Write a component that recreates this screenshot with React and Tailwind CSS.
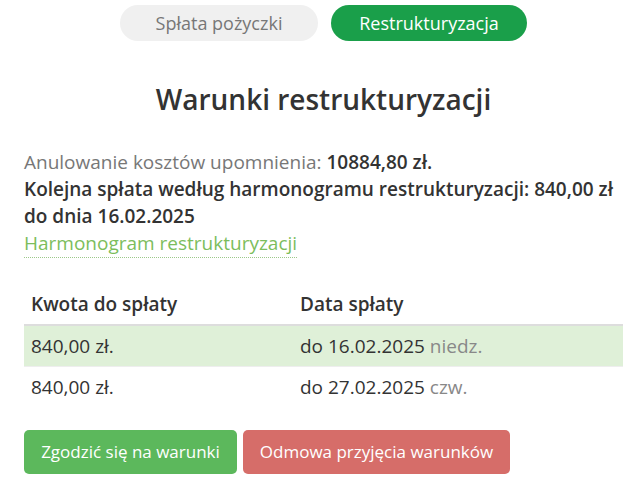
export default function App() {
  const rows = [
    { amount: '840,00 zł.', date: 'do 16.02.2025', day: 'niedz.', highlight: true },
    { amount: '840,00 zł.', date: 'do 27.02.2025', day: 'czw.', highlight: false },
  ];

  return (
    <div className="w-[623px] h-[480px] overflow-hidden bg-white pl-[24px] text-[#333]" style={{ fontFamily: '"Open Sans", "DejaVu Sans", sans-serif' }}>
      {/* tabs */}
      <div className="flex justify-center gap-[13px] pt-[5px]">
        <button className="h-[36px] w-[198px] rounded-full bg-[#f0f0f0] text-[18px] text-[#777]">Spłata pożyczki</button>
        <button className="h-[36px] w-[196px] rounded-full bg-[#1a9f4a] text-[18px] text-white">Restrukturyzacja</button>
      </div>

      <h1 className="mt-[40px] text-center text-[28px] leading-[36px] font-semibold text-[#333]">Warunki restrukturyzacji</h1>

      <div className="mt-[32px] text-[19px] leading-[27px]">
        <div>
          <span className="text-[#777]">Anulowanie kosztów upomnienia: </span>
          <span className="font-semibold">10884,80 zł.</span>
        </div>
        <div className="font-semibold">Kolejna spłata według harmonogramu restrukturyzacji: 840,00 zł do dnia 16.02.2025</div>
        <a className="inline-block leading-[27px] text-[#7cbd5c] border-b border-dotted border-[#9cc88a]">Harmonogram restrukturyzacji</a>
      </div>

      <table className="mt-[26px] w-full border-collapse text-[19px] leading-[24px]">
        <thead>
          <tr className="border-b-2 border-[#ddd]">
            <th className="w-[268px] px-[7px] py-[8px] text-left font-semibold">Kwota do spłaty</th>
            <th className="px-[8px] py-[8px] text-left font-semibold">Data spłaty</th>
          </tr>
        </thead>
        <tbody>
          {rows.map((r, i) => (
            <tr key={i} className={r.highlight ? 'bg-[#dff0d8]' : 'border-t border-[#eee]'}>
              <td className="px-[7px] py-[8px]">{r.amount}</td>
              <td className="px-[8px] py-[8px]">
                {r.date} <span className="text-[#888]">{r.day}</span>
              </td>
            </tr>
          ))}
        </tbody>
      </table>

      <div className="mt-[23px] flex gap-[6px]">
        <button className="h-[44px] w-[213px] rounded-[5px] bg-[#5cb85c] text-[17px] text-white">Zgodzić się na warunki</button>
        <button className="h-[44px] w-[267px] rounded-[5px] bg-[#d66d69] text-[17px] text-white">Odmowa przyjęcia warunków</button>
      </div>
    </div>
  );
}
